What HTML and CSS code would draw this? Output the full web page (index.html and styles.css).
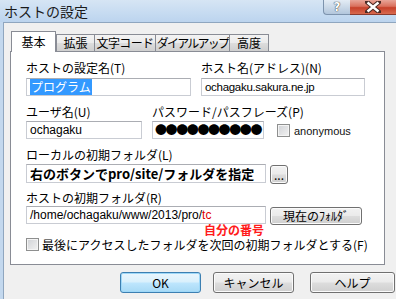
FILE: index.html
```html
<!DOCTYPE html>
<html>
  <head>
    <meta charset="utf-8" />
    <title>ホストの設定</title>
    <link rel="stylesheet" href="styles.css">
  </head>
  <body>
    <div class="window">
      <div class="titlebar">
        <span class="title">ホストの設定</span>
        <div class="caption-buttons">
          <span class="cap-help">?</span>
          <span class="cap-close">
            <svg width="16" height="12" viewBox="0 0 16 12">
              <path d="M2 1 L14 11 M14 1 L2 11" stroke="#4a2a24" stroke-width="4.5" stroke-linecap="square" />
              <path d="M2.5 1.5 L13.5 10.5 M13.5 1.5 L2.5 10.5" stroke="#fff" stroke-width="2.4" />
            </svg>
          </span>
        </div>
      </div>
      <div class="frame">
        <div class="client">
          <div class="tabs">
            <span class="tab active">基本</span>
            <span class="tab t-ext">拡張</span>
            <span class="tab t-code">文字コード</span>
            <span class="tab t-dial">ダイアルアップ</span>
            <span class="tab t-adv">高度</span>
          </div>
          <div class="panel">
            <div class="row row-1">
              <div class="field w-name">
                <label>ホストの設定名(T)</label>
                <div class="textbox"><span class="selected">プログラム</span></div>
              </div>
              <div class="field w-host">
                <label>ホスト名(アドレス)(N)</label>
                <div class="textbox host">ochagaku.sakura.ne.jp</div>
              </div>
            </div>
            <div class="row row-2">
              <div class="field w-user">
                <label>ユーザ名(U)</label>
                <div class="textbox">ochagaku</div>
              </div>
              <div class="field w-pass">
                <label>パスワード/パスフレーズ(P)</label>
                <div class="textbox dots">●●●●●●●●●●</div>
              </div>
              <div class="check anon">
                <span class="box"></span>
                <span>anonymous</span>
              </div>
            </div>
            <div class="row-3">
              <label>ローカルの初期フォルダ(L)</label>
              <div class="line">
                <div class="textbox w-local bold">右のボタンでpro/site/フォルダを指定</div>
                <button class="btn small">...</button>
              </div>
            </div>
            <div class="row-4">
              <label>ホストの初期フォルダ(R)</label>
              <div class="line">
                <div class="textbox w-local">/home/ochagaku/www/2013/pro/<span class="red">tc</span></div>
                <button class="btn current">現在のﾌｫﾙﾀﾞ</button>
              </div>
              <span class="note">自分の番号</span>
            </div>
            <div class="check last">
              <span class="box"></span>
              <span>最後にアクセスしたフォルダを次回の初期フォルダとする(F)</span>
            </div>
          </div>
          <div class="actions">
            <button class="btn default w-ok">OK</button>
            <button class="btn w-cancel">キャンセル</button>
            <button class="btn w-help">ヘルプ</button>
          </div>
        </div>
      </div>
    </div>
  </body>
</html>
```

FILE: styles.css
```css
body {
  margin: 0;
  font-family: "Noto Sans CJK JP", "Liberation Sans", sans-serif;
  font-size: 12px;
  color: #000;
}

.window {
  width: 396px;
  height: 299px;
  overflow: hidden;
  background: #c3d8ee;
  display: flex;
  flex-direction: column;
}

/* title bar */
.titlebar {
  height: 22px;
  display: flex;
  align-items: flex-start;
  background: linear-gradient(180deg, #d6e5f4 0%, #c6dbf1 60%, #bcd4ee 100%);
}

.title {
  margin: 1px 0 0 4px;
  font-size: 14px;
  line-height: 20px;
  color: #1a1a1a;
}

.caption-buttons {
  margin-left: auto;
  display: flex;
}

.cap-help {
  width: 27px;
  height: 15px;
  box-sizing: border-box;
  border: 1px solid #7d93ad;
  border-top: none;
  border-right: none;
  border-radius: 0 0 0 4px;
  background: linear-gradient(180deg, #e3ecf5 0%, #cbd9e8 50%, #b2c6dc 100%);
  color: #fff;
  font-family: "DejaVu Sans", sans-serif;
  font-weight: bold;
  font-size: 12px;
  line-height: 14px;
  text-align: center;
  text-shadow: 0 0 1px #333, 0 0 1px #333;
}

.cap-close {
  width: 46px;
  height: 15px;
  box-sizing: border-box;
  border-bottom: 1px solid #8a3b2f;
  background: linear-gradient(180deg, #e8a598 0%, #d9705d 45%, #c6402a 55%, #d86a4f 100%);
  display: flex;
  justify-content: center;
  align-items: center;
}

/* window frame & client */
.frame {
  flex: 1;
  display: flex;
  padding-left: 3px;
}

.client {
  flex: 1;
  background: #f0f0f0;
  border-left: 1px solid #8fa6bf;
  border-top: 1px solid #8fa6bf;
  padding: 8px 0 0 6px;
  display: flex;
  flex-direction: column;
}

/* tabs */
.tabs {
  display: flex;
  align-items: flex-end;
  height: 20px;
  padding-left: 1px;
  position: relative;
  z-index: 1;
}

.tab {
  height: 17px;
  box-sizing: border-box;
  border: 1px solid #898c95;
  border-bottom: none;
  margin-left: -1px;
  line-height: 16px;
  text-align: center;
  white-space: nowrap;
  background: linear-gradient(180deg, #f3f3f3 0%, #ebebeb 50%, #dddddd 51%, #cfcfcf 100%);
}

.tab.active {
  width: 45px;
  height: 21px;
  margin-bottom: -1px;
  background: #fff;
  line-height: 20px;
  margin-left: 0;
  margin-right: 1px;
}

.t-ext { width: 39px; }
.t-code { width: 62px; letter-spacing: -0.6px; }
.t-dial { width: 75px; letter-spacing: -1.8px; }
.t-adv { width: 40px; }

.panel {
  width: 375px;
  height: 214px;
  box-sizing: border-box;
  border: 1px solid #898c95;
  background: #fff;
  padding: 8px 0 0 15px;
  position: relative;
}

label {
  display: block;
  line-height: 16px;
  height: 16px;
  white-space: nowrap;
}

.row {
  display: flex;
  gap: 10px;
  align-items: flex-end;
}

.textbox {
  height: 18px;
  box-sizing: border-box;
  border: 1px solid #c9ccd3;
  border-top-color: #abadb3;
  background: #fff;
  padding: 0 3px;
  line-height: 16px;
  white-space: nowrap;
  overflow: hidden;
  font-family: "Liberation Sans", "Noto Sans CJK JP", sans-serif;
}

.row-1 .textbox {
  margin-top: 2px;
}

.host {
  font-size: 11.5px;
  letter-spacing: -0.3px;
}

.w-name { width: 165px; }
.w-host { width: 164px; }
.w-user { width: 116px; }
.w-pass { width: 112px; }
.w-local { width: 240px; }

.selected {
  background: #3399ff;
  color: #fff;
  font-family: "Noto Sans CJK JP", sans-serif;
  padding: 0 1px;
}

.row-2 {
  margin-top: 8px;
}

.row-2 .textbox {
  margin-top: 1px;
}

.dots {
  font-family: "Noto Sans CJK JP", sans-serif;
  font-size: 12px;
  letter-spacing: -1.4px;
  padding-left: 2px;
}

.check {
  display: flex;
  align-items: center;
  gap: 4px;
}

.anon {
  margin: 0 0 2px 3px;
  font-family: "Liberation Sans", sans-serif;
  font-size: 11px;
  color: #111;
}

.box {
  width: 11px;
  height: 11px;
  border: 1px solid #8e8f8f;
  background: linear-gradient(135deg, #d0d2d6 0%, #f2f2f2 100%);
  box-shadow: inset 0 0 0 1px #f4f4f4;
}

.row-3 {
  margin-top: 8px;
}

.row-4 {
  margin-top: 6px;
  position: relative;
}

.line {
  display: flex;
  align-items: flex-start;
  gap: 4px;
}

.row-3 .textbox {
  height: 19px;
  margin-top: 1px;
}

.bold {
  font-family: "Noto Sans CJK JP", sans-serif;
  font-weight: bold;
  font-size: 13px;
  line-height: 17px;
}

.red {
  color: #e00000;
}

.note {
  position: absolute;
  left: 178px;
  top: 34px;
  color: #ff1a1a;
  font-weight: bold;
  font-size: 12px;
  line-height: 11px;
}

.last {
  margin-top: 13px;
  gap: 3px;
  line-height: 13px;
}

/* buttons */
.btn {
  font-family: "Noto Sans CJK JP", sans-serif;
  font-size: 12px;
  color: #000;
  box-sizing: border-box;
  border: 1px solid #707070;
  border-radius: 3px;
  background: linear-gradient(180deg, #f2f2f2 0%, #ebebeb 48%, #dddddd 52%, #cfcfcf 100%);
  box-shadow: inset 0 0 0 1px #fbfbfb;
  padding: 0;
  line-height: 16px;
}

.small {
  width: 18px;
  height: 19px;
  margin-top: 2px;
  line-height: 12px;
}

.current {
  width: 92px;
  height: 18px;
  margin-top: 1px;
}

.actions {
  display: flex;
  margin: 7px 0 0 110px;
}

.actions .btn {
  height: 21px;
}

.default {
  border-color: #3c7fb1;
  background: linear-gradient(180deg, #eaf6fd 0%, #d9f0fc 48%, #bee6fd 52%, #a7d9f5 100%);
  box-shadow: inset 0 0 0 1px #9ed8f8;
}

.w-ok { width: 81px; }
.w-cancel { width: 81px; margin-left: 12px; }
.w-help { width: 85px; margin-left: 16px; }
```
